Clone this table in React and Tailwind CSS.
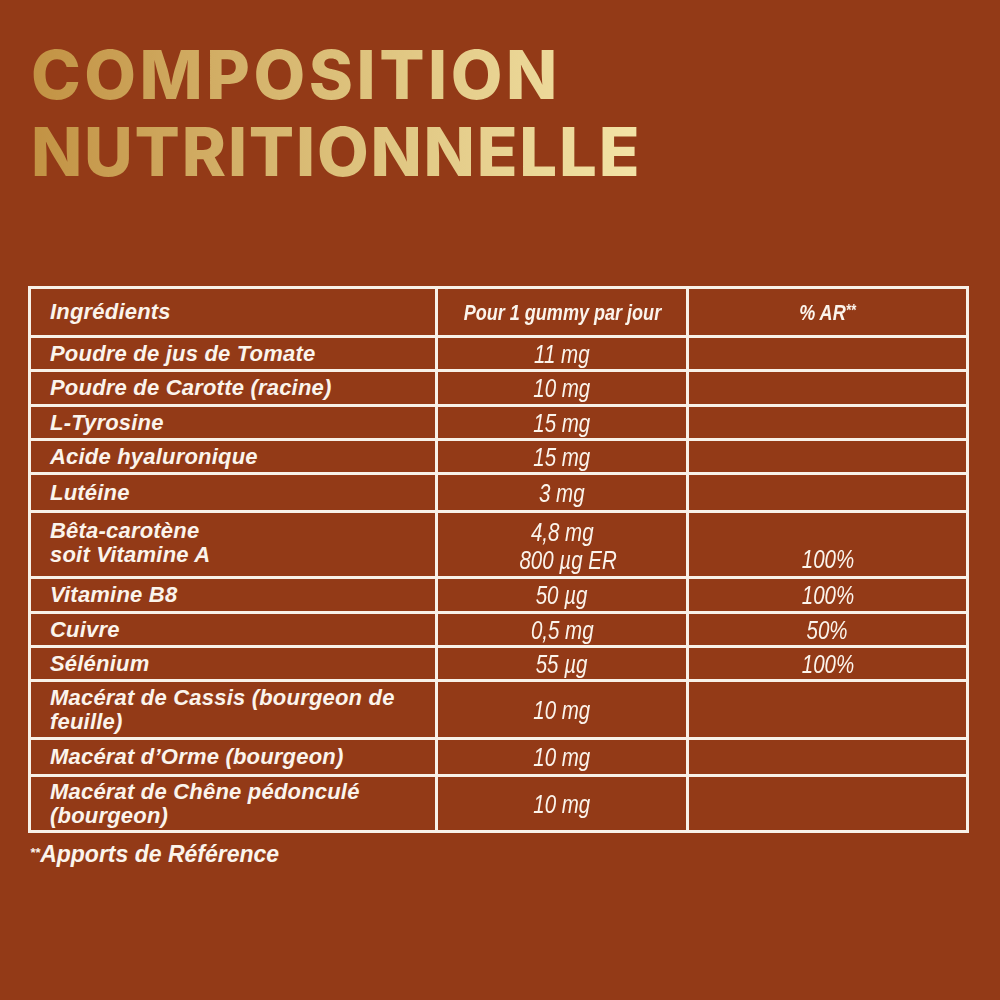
const rows = [
  { name: 'Poudre de jus de Tomate', dose: '11 mg', ar: '', h: 'h-[31px]' },
  { name: 'Poudre de Carotte (racine)', dose: '10 mg', ar: '', h: 'h-[32px]' },
  { name: 'L-Tyrosine', dose: '15 mg', ar: '', h: 'h-[31px]' },
  { name: 'Acide hyaluronique', dose: '15 mg', ar: '', h: 'h-[31px]' },
  { name: 'Lutéine', dose: '3 mg', ar: '', h: 'h-[35px]' },
  { name: 'Vitamine B8', dose: '50 µg', ar: '100%', h: 'h-[32px]' },
  { name: 'Cuivre', dose: '0,5 mg', ar: '50%', h: 'h-[31px]' },
  { name: 'Sélénium', dose: '55 µg', ar: '100%', h: 'h-[31px]' },
];

const cell = 'bg-[#933a17] flex items-center';
const nameCls = "pl-[19px] font-['Liberation_Sans',Arial,sans-serif] font-bold italic text-[22px] leading-[24px] tracking-[0.2px] text-[#fbf4ec]";
const numCls = "justify-center font-['Liberation_Sans',Arial,sans-serif] italic text-[25px] leading-[28px] text-[#fbf4ec]";

// condensed look: the narrow face isn't installed, so squeeze the regular one
const Narrow = ({ children, className = '' }) => (
  <span className={`inline-block scale-x-[0.82] whitespace-nowrap ${className}`}>{children}</span>
);

const Row = ({ name, dose, ar, h }) => (
  <>
    <div className={`${cell} ${nameCls} ${h}`}>{name}</div>
    <div className={`${cell} ${numCls} ${h}`}>
      <Narrow>{dose}</Narrow>
    </div>
    <div className={`${cell} ${numCls} ${h}`}>
      <Narrow>{ar}</Narrow>
    </div>
  </>
);

export default function App() {
  return (
    <div className="w-[1000px] h-[1000px] bg-[#933a17] pt-[36px] overflow-hidden">
      {/* Title */}
      <h1 className="ml-[31px] inline-block font-['Inter',sans-serif] font-extrabold text-[67px] leading-[77px] tracking-[1.8px] bg-gradient-to-r from-[#c29243] via-[#dcc07a] to-[#f3e3a6] bg-clip-text text-transparent">
        <span className="tracking-[3.5px]">COMPOSITION</span>
        <br />
        NUTRITIONNELLE
      </h1>

      {/* Table */}
      <div className="ml-[28px] mt-[96px] w-[941px] bg-[#f8f1e8] p-[3px] grid grid-cols-[404px_248px_277px] gap-[3px]">
        <div className={`${cell} ${nameCls} h-[46px]`}>Ingrédients</div>
        <div className={`${cell} h-[46px] justify-center font-['Liberation_Sans',Arial,sans-serif] font-bold italic text-[22px] text-[#fbf4ec]`}>
          <Narrow>Pour 1 gummy par jour</Narrow>
        </div>
        <div className={`${cell} h-[46px] justify-center items-start pt-[7px] font-['Liberation_Sans',Arial,sans-serif] font-bold italic text-[22px] text-[#fbf4ec]`}>
          <Narrow>
            % AR<span className="relative -top-[4px] text-[16px]">**</span>
          </Narrow>
        </div>

        {rows.slice(0, 5).map((r) => (
          <Row key={r.name} {...r} />
        ))}

        <div className={`bg-[#933a17] h-[63px] pt-[6px] ${nameCls}`}>
          Bêta-carotène
          <br />
          soit Vitamine A
        </div>
        <div className={`bg-[#933a17] h-[63px] flex flex-col items-center pt-[3px] ${numCls}`}>
          <Narrow>4,8 mg</Narrow>
          <Narrow className="pl-[14px]">800 µg ER</Narrow>
        </div>
        <div className={`bg-[#933a17] h-[63px] flex items-end justify-center pb-[3px] ${numCls}`}>
          <Narrow>100%</Narrow>
        </div>

        {rows.slice(5).map((r) => (
          <Row key={r.name} {...r} />
        ))}

        <div className={`${cell} ${nameCls} h-[55px]`}>
          <span>
            Macérat de Cassis (bourgeon de
            <br />
            feuille)
          </span>
        </div>
        <div className={`${cell} ${numCls} h-[55px]`}>
          <Narrow>10 mg</Narrow>
        </div>
        <div className={`${cell} h-[55px]`}></div>

        <div className={`${cell} ${nameCls} h-[34px]`}>Macérat d’Orme (bourgeon)</div>
        <div className={`${cell} ${numCls} h-[34px]`}>
          <Narrow>10 mg</Narrow>
        </div>
        <div className={`${cell} h-[34px]`}></div>

        <div className={`${cell} ${nameCls} h-[53px]`}>
          <span>
            Macérat de Chêne pédonculé
            <br />
            (bourgeon)
          </span>
        </div>
        <div className={`${cell} ${numCls} h-[53px]`}>
          <Narrow>10 mg</Narrow>
        </div>
        <div className={`${cell} h-[53px]`}></div>
      </div>

      {/* Footnote */}
      <p className="ml-[30px] mt-[8px] font-['Liberation_Sans',Arial,sans-serif] font-bold italic text-[23px] leading-[26px] text-[#fbf4ec]">
        <span className="relative -top-[5px] text-[13px]">**</span>Apports de Référence
      </p>
    </div>
  );
}
